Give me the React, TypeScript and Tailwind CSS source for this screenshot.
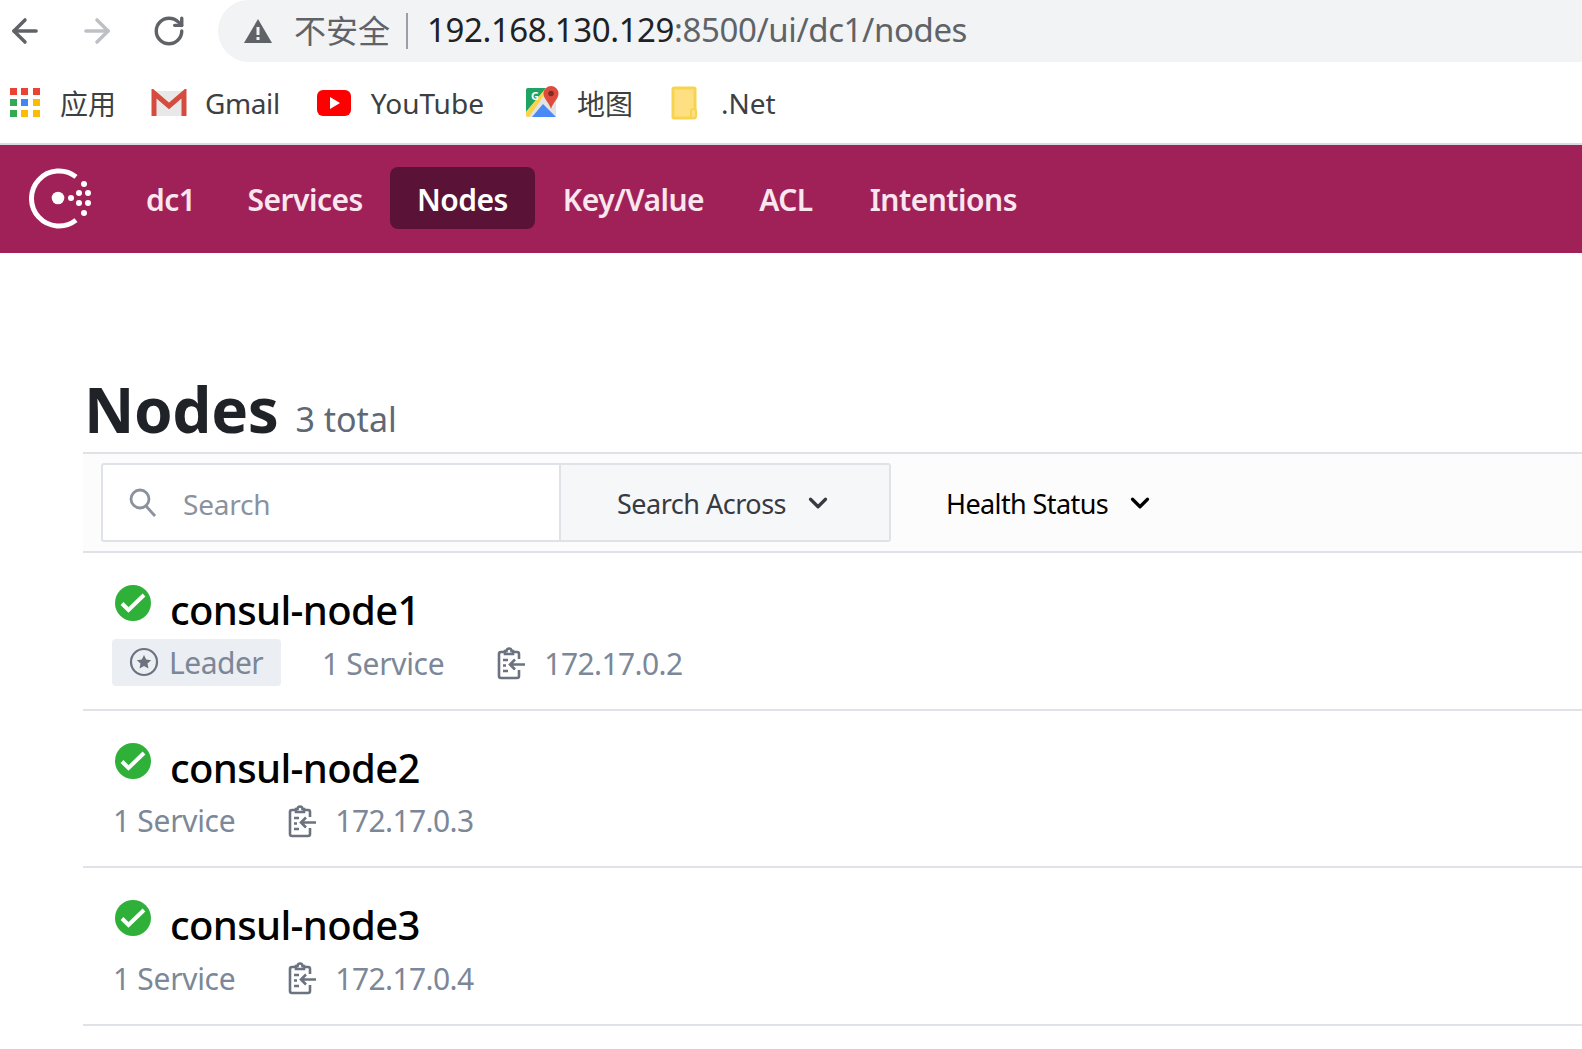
import React from "react";
import { ArrowLeft, ArrowRight, RotateCw, ChevronDown } from "lucide-react";

const font = "font-['Noto_Sans','Noto_Sans_CJK_SC',sans-serif]";
const cjk = "font-['Noto_Sans_CJK_SC',sans-serif]";

const ClipboardIcon = () => (
  <svg width="28" height="34" viewBox="0 0 28 34" fill="none" stroke="#6b7280" strokeWidth="2.6">
    <path d="M8 6H4a2 2 0 0 0-2 2v22a2 2 0 0 0 2 2h16a2 2 0 0 0 2-2v-6" />
    <path d="M16 6h4a2 2 0 0 1 2 2v5" />
    <path d="M8 8V5h1.5a2.5 2.5 0 0 1 5 0H16v3z" />
    <path d="M6 14h5M6 19.5h3M6 25h5" />
    <path d="M28 18.5H13M18 13.5l-5 5 5 5" />
  </svg>
);

const SearchIcon = () => (
  <svg width="30" height="30" viewBox="0 0 30 30" fill="none" stroke="#8a929e" strokeWidth="2.8">
    <circle cx="12" cy="11" r="9" />
    <path d="M18 18l9 10" />
  </svg>
);

const HealthIcon = () => (
  <svg width="38" height="38" viewBox="0 0 38 38">
    <circle cx="19" cy="19" r="18" fill="#2eb039" />
    <path d="M8 19.5l6.5 6.5L30 11" fill="none" stroke="#fff" strokeWidth="4" />
  </svg>
);

const ConsulLogo = () => (
  <svg width="66" height="62" viewBox="0 0 66 62" fill="#fff" className="mt-[2px]">
    <path d="M47 8.9A27.5 27.5 0 1 0 47 52.1" fill="none" stroke="#fff" strokeWidth="5" />
    <circle cx="29" cy="30" r="6.3" />
    <circle cx="42" cy="30" r="3" />
    <circle cx="50" cy="25" r="3" />
    <circle cx="50" cy="35" r="3" />
    <circle cx="59" cy="25" r="3" />
    <circle cx="59" cy="35" r="3" />
    <circle cx="55" cy="16" r="3" />
    <circle cx="55" cy="45" r="3" />
  </svg>
);

const AppsIcon = () => {
  const colors = ["#ea4335", "#ea4335", "#ea4335", "#34a853", "#4285f4", "#fbbc04", "#34a853", "#fbbc04", "#fbbc04"];
  return (
    <div className="grid grid-cols-3 gap-[4px] w-[30px]">
      {colors.map((c, i) => (
        <svg key={i} width="7" height="7" viewBox="0 0 7 7">
          <rect width="7" height="7" fill={c} />
        </svg>
      ))}
    </div>
  );
};

const GmailIcon = () => (
  <svg width="36" height="28" viewBox="0 0 36 28">
    <rect x="1" y="2" width="34" height="25" fill="#e8e8e8" />
    <path d="M3 27V4l15 13L33 4v23" fill="none" stroke="#d54c3f" strokeWidth="5" />
  </svg>
);

const YoutubeIcon = () => (
  <svg width="34" height="26" viewBox="0 0 34 26">
    <rect width="34" height="26" rx="6" fill="#ff0000" />
    <path d="M13 7l10 6-10 6z" fill="#fff" />
  </svg>
);

const MapsIcon = () => (
  <svg width="33" height="33" viewBox="0 0 33 33">
    <path d="M2 2h26a2 2 0 0 1 2 2v25a2 2 0 0 1-2 2H2a2 2 0 0 1-2-2V4a2 2 0 0 1 2-2z" fill="#e3e3e3" />
    <path d="M0 4a2 2 0 0 1 2-2h18L0 26z" fill="#1ea362" />
    <path d="M0 26 20 2h3L3 31H2a2 2 0 0 1-2-2z" fill="#fbd34a" />
    <path d="M6 31 17 18l13 13z" fill="#4a8af4" />
    <text x="5" y="14" fontSize="11" fontWeight="700" fill="#fff">G</text>
    <path d="M25 0a7.5 7.5 0 0 1 7.5 7.5C32.500 13 27 16 25 23c-2-7-7.500-10-7.500-15.500A7.500 7.500 0 0 1 25 0z" fill="#dd4b3e" />
    <circle cx="25" cy="7.500" r="2.800" fill="#802b20" />
  </svg>
);

const FolderIcon = () => (
  <svg width="30" height="34" viewBox="0 0 30 34">
    <rect x="3" y="2" width="22" height="30" rx="1" fill="#fee083" stroke="#f8d34f" strokeWidth="3" />
    <rect x="21" y="23" width="5" height="9" rx="2" fill="#fee083" stroke="#f8d34f" strokeWidth="2" />
  </svg>
);

const Bookmark = ({ icon, label, className, labelClass }: { icon: React.ReactNode; label: string; className?: string; labelClass?: string }) => (
  <div className={`flex items-center gap-[18px] ${className ?? ""}`}>
    {icon}
    <span className={`text-[28px] text-[#3c4043] ${labelClass ?? ""}`}>{label}</span>
  </div>
);

const NavItem = ({ label, active, className }: { label: string; active?: boolean; className?: string }) => (
  <div
    className={`${
      active
        ? "h-[62px] px-[27px] flex items-center rounded-[8px] bg-[#5a1336] text-white text-[30px] font-semibold"
        : "h-[62px] px-[27px] flex items-center text-[#f9e6ef] text-[30px] font-semibold"
    } ${className ?? ""}`}
  >
    <span className="tracking-[-0.5px] pt-[2px]">{label}</span>
  </div>
);

const NodeRow = ({ name, ip, leader }: { name: string; ip: string; leader?: boolean }) => (
  <div className="h-[157.5px] border-b-2 border-[#dfe3e8] pl-[31px] pt-[31px]">
    <div className="flex items-center gap-[18px] h-[52px]">
      <div className="-mt-[14px]">
        <HealthIcon />
      </div>
      <span className="text-[40px] leading-[52px] text-black font-medium tracking-[-0.65px]">{name}</span>
    </div>
    <div className="flex items-center h-[48px] mt-[3px] -ml-[1px] text-[30px] text-[#7c8797]">
      {leader && (
        <div className="h-[47px] w-[169px] -ml-[1px] -mt-[2px] mr-[41px] rounded-[4px] bg-[#ebeef2] flex items-center pl-[17px] gap-[10px]">
          <svg width="30" height="30" viewBox="0 0 30 30">
            <circle cx="15" cy="15" r="13" fill="none" stroke="#6b7280" strokeWidth="2.2" />
            <path d="M15 8l2.2 4.6 5 .6-3.7 3.4 1 5L15 19.1l-4.5 2.5 1-5-3.7-3.4 5-.6z" fill="#6b7280" />
          </svg>
          <span className="tracking-[-0.5px]">Leader</span>
        </div>
      )}
      <span className="tracking-[-0.3px]">1 Service</span>
      <div className="ml-[53px] mr-[19px] flex items-center">
        <ClipboardIcon />
      </div>
      <span className="tracking-[-0.6px]">{ip}</span>
    </div>
  </div>
);

export default function App() {
  return (
    <div className={`w-[1582px] h-[1049px] overflow-hidden bg-white ${font}`}>
      <div className="h-[145px] border-b-2 border-[#d9dbde]">
        <div className="flex items-center h-[62px]">
          <ArrowLeft className="ml-[6px] text-[#5f6368]" size={38} strokeWidth={2.2} />
          <ArrowRight className="ml-[34px] text-[#bdc1c6]" size={38} strokeWidth={2.2} />
          <RotateCw className="ml-[36px] text-[#5f6368]" size={34} strokeWidth={2.4} />
          <div className="ml-[32px] flex-1 h-[62px] rounded-l-[31px] bg-[#f1f3f4] flex items-center pl-[25px]">
            <svg width="30" height="26" viewBox="0 0 30 26">
              <path d="M15 1 29 25H1z" fill="#5f6368" />
              <rect x="13.5" y="9" width="3" height="8" fill="#f1f3f4" />
              <rect x="13.5" y="19" width="3" height="3" fill="#f1f3f4" />
            </svg>
            <span className={`ml-[21px] -mt-[4px] text-[32px] text-[#5f6368] ${cjk}`}>不安全</span>
            <div className="ml-[16px] mr-[19px] w-[2px] h-[36px] bg-[#9aa0a6]" />
            <span className="-mt-[2px] text-[33px] text-[#202124] tracking-[-0.4px]">192.168.130.129</span>
            <span className="-mt-[2px] text-[33px] text-[#5f6368] tracking-[-0.4px]">:8500/ui/dc1/nodes</span>
          </div>
        </div>
        <div className="flex items-center h-[81px] pl-[10px] gap-[37px]">
          <Bookmark icon={<AppsIcon />} label="应用" className="-mr-[2px]" labelClass={`pl-[2px] ${cjk}`} />
          <Bookmark icon={<GmailIcon />} label="Gmail" labelClass="tracking-[-0.4px]" />
          <Bookmark icon={<YoutubeIcon />} label="YouTube" labelClass="pl-[2px]" />
          <Bookmark icon={<MapsIcon />} label="地图" className="ml-[5px]" labelClass={cjk} />
          <Bookmark icon={<FolderIcon />} label=".Net" labelClass="pl-[3px]" />
        </div>
      </div>

      <div className="h-[108px] bg-[#a02157] flex items-center pl-[29px] pb-[2px]">
        <ConsulLogo />
        <div className="flex items-center ml-[24px]">
          <NavItem label="dc1" className="-mr-[2px]" />
          <NavItem label="Services" />
          <NavItem label="Nodes" active />
          <NavItem label="Key/Value" className="ml-[1px]" />
          <NavItem label="ACL" className="ml-[1px]" />
          <NavItem label="Intentions" className="ml-[3px]" />
        </div>
      </div>

      <div className="ml-[83px]">
        <div className="h-[199px] flex items-end pb-[1px] pl-[1px] gap-[17px]">
          <span className="text-[62px] leading-[84px] font-bold text-[#1f2328] tracking-[-0.4px]">Nodes</span>
          <span className="text-[34px] leading-[64px] text-[#5f6875]">3 total</span>
        </div>
        <div className="h-[101px] border-y-2 border-[#dfe3e8] bg-[#fcfcfc] flex items-center pl-[18px]">
          <div className="w-[790px] h-[79px] flex border-2 border-[#dfe3e8] rounded-[3px] bg-white">
            <div className="w-[456px] flex items-center pl-[25px] gap-[25px] text-[28px] text-[#8a929e]">
              <SearchIcon />
              <span className="tracking-[-0.2px] pt-[2px]">Search</span>
            </div>
            <div className="flex-1 border-l-2 border-[#dfe3e8] bg-[#f6f7f9] flex items-center pl-[56px] gap-[17px] text-[27px] text-[#373a42]">
              <span className="tracking-[-0.5px] pt-[4px]">Search Across</span>
              <ChevronDown size={30} strokeWidth={2.6} />
            </div>
          </div>
          <div className="ml-[55px] flex items-center gap-[17px] text-[27px] text-black">
            <span className="tracking-[-0.6px] pt-[4px]">Health Status</span>
            <ChevronDown size={30} strokeWidth={2.6} />
          </div>
        </div>
        <NodeRow name="consul-node1" ip="172.17.0.2" leader />
        <NodeRow name="consul-node2" ip="172.17.0.3" />
        <NodeRow name="consul-node3" ip="172.17.0.4" />
      </div>
    </div>
  );
}
